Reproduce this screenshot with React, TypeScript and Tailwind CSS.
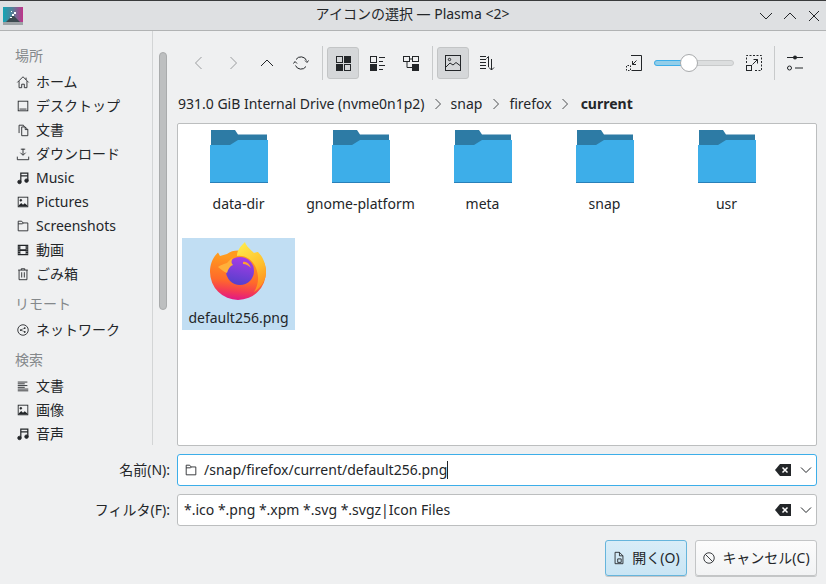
import type { ReactNode } from "react";

function Ico({ children, size = 16, className = "" }: { children: ReactNode; size?: number; className?: string }) {
  return (
    <svg width={size} height={size} viewBox="0 0 16 16" fill="none" stroke="currentColor" strokeWidth="1" className={`shrink-0 ${className}`}>
      {children}
    </svg>
  );
}

const icons: Record<string, ReactNode> = {
  home: <path d="M1.500 8.500 8 2l6.500 6.500M3.500 7v7.500h3v-4h3v4h3V7M11.500 3v2.500" />,
  desktop: <><rect x="2.500" y="2.500" width="11" height="11" /><path d="M4 11.500h8" /></>,
  docs: <path d="M3.500 11.500v-9h5l1 2M6.500 14.500v-10h4l3 3v7zM10.500 4.500v3h3" />,
  download: <path d="M1.500 11v3.500h13V11M8 2v7M5 6.500 8 9.500l3-3M5.500 2.500h5" />,
  music: <><path d="M5.500 12V2.500h8V11M5.500 5.500h8" strokeWidth="1.400" /><circle cx="4" cy="12.500" r="2" fill="currentColor" /><circle cx="12" cy="11" r="2" fill="currentColor" /></>,
  picture: <><rect x="2.500" y="2.500" width="11" height="11" /><circle cx="5.500" cy="6" r="1" fill="currentColor" /><path d="M3 12l3-3 2 2 2-1.500 3 2.500v1H3z" fill="currentColor" stroke="none" /></>,
  folder: <path d="M2.500 13.500v-11h4l1.500 2h5.500v9zM2.500 5.500h5l1-1" />,
  video: <><rect x="2" y="2" width="12" height="12" fill="currentColor" stroke="none" /><path d="M5 3.500h6v3.500H5zM5 9h6v3.500H5z" fill="#eff0f1" stroke="none" /><path d="M3 4.500h1M3 7h1M3 9.500h1M3 12h1M12 4.500h1M12 7h1M12 9.500h1M12 12h1" stroke="#eff0f1" /></>,
  trash: <path d="M2.500 3.500h11M6 3.500v-1.500h4v1.500M3.500 3.500v11h9v-11M6.500 6v6M9.500 6v6" />,
  network: <><circle cx="8" cy="8" r="6" /><circle cx="5.500" cy="8" r="1" fill="currentColor" stroke="none" /><circle cx="10" cy="5.800" r="1" fill="currentColor" stroke="none" /><circle cx="10" cy="10.200" r="1" fill="currentColor" stroke="none" /><path d="M5.500 8 10 5.800M5.500 8 10 10.200" strokeWidth="0.600" /></>,
  text: <path d="M2 3.500h11M2 5.500h8M2 7.500h11M2 9.500h8M2 11.500h12M2 13.500h12" />,
};

function Place({ icon, label }: { icon: string; label: string }) {
  return (
    <div className="flex h-6 items-center gap-[6px] pl-[16px]">
      <span className="flex h-4 w-[14px] items-center justify-center">
        <Ico size={14}>{icons[icon]}</Ico>
      </span>
      <span className="whitespace-nowrap">{label}</span>
    </div>
  );
}

function Header({ label, className = "" }: { label: string; className?: string }) {
  return <div className={`pl-[15px] text-[#84888b] ${className}`}>{label}</div>;
}

function Sidebar() {
  return (
    <aside className="mb-[2px] w-[153px] shrink-0 border-r border-[#d3d5d6] pt-[15px]">
      <Header label="場所" className="mb-[4px] h-5 leading-5" />
      <Place icon="home" label="ホーム" />
      <Place icon="desktop" label="デスクトップ" />
      <Place icon="docs" label="文書" />
      <Place icon="download" label="ダウンロード" />
      <Place icon="music" label="Music" />
      <Place icon="picture" label="Pictures" />
      <Place icon="folder" label="Screenshots" />
      <Place icon="video" label="動画" />
      <Place icon="trash" label="ごみ箱" />
      <Header label="リモート" className="mt-[8px] mb-[4px] h-5 leading-5" />
      <Place icon="network" label="ネットワーク" />
      <Header label="検索" className="mt-[8px] mb-[4px] h-5 leading-5" />
      <Place icon="text" label="文書" />
      <Place icon="picture" label="画像" />
      <Place icon="music" label="音声" />
    </aside>
  );
}

function ToolBtn({ children, active, muted }: { children: ReactNode; active?: boolean; muted?: boolean }) {
  return (
    <div
      className={`flex h-8 w-8 items-center justify-center rounded-[3px] ${
        active ? "border border-[#c3c5c6] bg-[#d5d7d9]" : ""
      } ${muted ? "text-[#9a9c9e]" : "text-[#232629]"}`}
    >
      {children}
    </div>
  );
}

function Sep({ className = "" }: { className?: string }) {
  return <div className={`h-[34px] w-px bg-[#c8cacb] ${className}`} />;
}

function Toolbar() {
  return (
    <div className="flex h-[34px] items-center pr-[6px] pl-[6px]">
      <div className="flex items-center gap-[2px]">
        <ToolBtn muted><Ico><path d="M10.500 2 4.500 8l6 6" /></Ico></ToolBtn>
        <ToolBtn muted><Ico><path d="M5.500 2l6 6-6 6" /></Ico></ToolBtn>
        <ToolBtn><Ico><path d="M2 11l6-6 6 6" /></Ico></ToolBtn>
        <ToolBtn>
          <Ico>
            <path d="M13.500 5.500A6 6 0 0 0 3 4.500M2.500 10.500A6 6 0 0 0 13 11.500" />
            <path d="M2 7.500 4 9.500M2 7.500 0.500 9.500M14 8.500 12 6.500M14 8.500 15.500 6.500" transform="translate(0 -1) " />
          </Ico>
        </ToolBtn>
      </div>
      <Sep className="mr-[4px] ml-[5px]" />
      <div className="flex items-center gap-[2px]">
        <ToolBtn active>
          <Ico>
            <rect x="1.500" y="1.500" width="6" height="6" />
            <rect x="9" y="1" width="7" height="7" fill="currentColor" stroke="none" />
            <rect x="1" y="9" width="7" height="7" fill="currentColor" stroke="none" />
            <rect x="9.500" y="9.500" width="6" height="6" />
          </Ico>
        </ToolBtn>
        <ToolBtn>
          <Ico>
            <rect x="1.500" y="1.500" width="6" height="6" />
            <rect x="1" y="9" width="7" height="7" fill="currentColor" stroke="none" />
            <path d="M10 2.500h6M10 6.500h4M10 10.500h6M10 14.500h4" />
          </Ico>
        </ToolBtn>
        <ToolBtn>
          <Ico>
            <rect x="0.500" y="1.500" width="6" height="5" />
            <rect x="9.500" y="1.500" width="6" height="5" />
            <rect x="9" y="9" width="7" height="7" fill="currentColor" stroke="none" />
            <path d="M6.500 4h3M4 6.500V12.500h5" />
          </Ico>
        </ToolBtn>
      </div>
      <Sep className="mr-[4px] ml-[5px]" />
      <div className="flex items-center gap-[2px]">
        <ToolBtn active>
          <Ico>
            <rect x="0.500" y="0.500" width="15" height="15" />
            <circle cx="4.500" cy="4.500" r="1.200" />
            <path d="M1 12l4-4 3 2 3-2.500 4 3" />
          </Ico>
        </ToolBtn>
        <ToolBtn>
          <Ico>
            <path d="M1 1.500h6M1 4.500h6M1 7.500h6M1 10.500h6M1 13.500h6M12.500 4v11M10 12.500l2.500 2.500 2.500-2.500M9.500 12V1.500L7.500 3.500" />
          </Ico>
        </ToolBtn>
      </div>
      <div className="ml-auto flex items-center">
        <ToolBtn>
          <Ico>
            <path d="M5 0.500H15.500V15.500H5.500M10.500 5.500 6.500 9.500M6.500 6V9.500H10" />
            <path d="M0.500 15.500V10.500H4.500V15.500Z" strokeDasharray="1.500 1.500" />
          </Ico>
        </ToolBtn>
        <div className="relative mx-[4px] h-[6px] w-[80px] rounded-full border border-[#c8cacb] bg-[#dcdedf]">
          <div className="absolute -top-px -left-px h-[6px] w-[36px] rounded-l-full border border-[#3daee9] bg-[#93cee9]" />
          <div className="absolute -top-[7px] left-[25px] h-[18px] w-[18px] rounded-full border border-[#a8aaac] bg-white" />
        </div>
        <ToolBtn>
          <Ico>
            <path d="M0.500 8V0.500H15.500V15.500H8" strokeDasharray="2 1.500" />
            <rect x="0.500" y="10.500" width="5" height="5" />
            <path d="M6.500 9.500l5-5M7.500 4.500h4v4" />
          </Ico>
        </ToolBtn>
        <Sep className="mx-[4px]" />
        <ToolBtn>
          <Ico>
            <path d="M0 2.500h16M0 13h4M8 13h8" />
            <circle cx="8" cy="2.500" r="2" fill="currentColor" stroke="none" />
            <circle cx="2.500" cy="13" r="2" fill="#eff0f1" />
          </Ico>
        </ToolBtn>
      </div>
    </div>
  );
}

function Breadcrumb() {
  const chevron = (
    <svg width="8" height="12" viewBox="0 0 8 12" fill="none" stroke="#4d4f51" className="mx-[9px] shrink-0">
      <path d="M1.500 1l5 5-5 5" />
    </svg>
  );
  return (
    <div className="mt-[12px] flex h-6 items-center pl-[1px]">
      <span>931.0 GiB Internal Drive (nvme0n1p2)</span>
      {chevron}
      <span>snap</span>
      <span className="w-px" />
      {chevron}
      <span>firefox</span>
      {chevron}
      <span className="ml-[3px] font-bold">current</span>
    </div>
  );
}

function FolderIcon() {
  return (
    <svg width="58" height="54" viewBox="0 0 58 54">
      <path d="M1 0H25L28 4.500H57V16H1Z" fill="#2d7ba5" />
      <path d="M0 15H20L28 10H58V53H0Z" fill="#3daee9" />
      <rect x="0" y="52" width="58" height="1" fill="#2980b9" />
    </svg>
  );
}

function FirefoxLogo() {
  return (
    <svg width="56" height="58" viewBox="0 0 56 58" className="-ml-px">
      <defs>
        <linearGradient id="ffBase" x1="0.550" y1="0.150" x2="0.450" y2="1">
          <stop offset="0" stopColor="#ff9a1f" />
          <stop offset="0.550" stopColor="#ff6a2a" />
          <stop offset="0.800" stopColor="#f43a55" />
          <stop offset="1" stopColor="#e01888" />
        </linearGradient>
        <linearGradient id="ffFlame" x1="0.300" y1="0" x2="0.700" y2="1">
          <stop offset="0" stopColor="#ffe84a" />
          <stop offset="0.550" stopColor="#ffc02c" />
          <stop offset="1" stopColor="#ff8a1f" />
        </linearGradient>
        <linearGradient id="ffBall" x1="0.600" y1="0" x2="0.400" y2="1">
          <stop offset="0" stopColor="#a83ce6" />
          <stop offset="1" stopColor="#5440cc" />
        </linearGradient>
      </defs>
      <path d="M8 10.500 10 14 17 12C20 9.500 24 8.500 28 8.500L42 12 52 17C55 21 56 26 56 30A28 28 0 0 1 0 30C0 22 3 15 8 10.500Z" fill="url(#ffBase)" />
      <path d="M35 0C36 4 40 7 44 11 46 10 47.500 10 48 10 53 15 56 22 56 30 56 38 51 46 44 50 49 42 49 34 46 26 42 17 35 13 27 14 27 8 31 4 35 0Z" fill="url(#ffFlame)" />
      <circle cx="30" cy="29" r="14" fill="url(#ffBall)" />
      <path d="M33 20C36 19 39 21 41 26 39 24 36 22 33 22Z" fill="#ffa030" />
      <path d="M8 25C10 23 14 22 17 21 19 19 20 17 23 16 21 19 21 21 23 23 20 24 18 27 17 31 14 30 11 27 8 25Z" fill="#ffb03a" />
    </svg>
  );
}

function FileItem({ name }: { name: string }) {
  return (
    <div className="flex h-[92px] w-[113px] flex-col items-center pt-[6px]">
      <div className="flex h-[56px] items-start">
        <FolderIcon />
      </div>
      <div className="mt-[8px] h-5 whitespace-nowrap leading-5">{name}</div>
    </div>
  );
}

function FilePane() {
  const names = ["data-dir", "gnome-platform", "meta", "snap", "usr"];
  return (
    <div className="mt-[7px] h-[323px] rounded-[2px] border border-[#bcbebf] bg-white">
      <div className="grid grid-cols-[repeat(5,122px)] gap-y-[22px] pl-[4px]">
        {names.map((n) => (
          <FileItem key={n} name={n} />
        ))}
        <div className="flex h-[92px] w-[113px] flex-col items-center bg-[#c1def3] pt-[4px]">
          <FirefoxLogo />
          <div className="mt-[8px] h-5 whitespace-nowrap leading-5">default256.png</div>
        </div>
      </div>
    </div>
  );
}

function Backspace() {
  return (
    <svg width="16" height="12" viewBox="0 0 16 12">
      <path d="M5 0H16V12H5L0 6Z" fill="#232629" />
      <path d="M7.500 3.500l5 5M12.500 3.500l-5 5" stroke="#fff" strokeWidth="1.500" />
    </svg>
  );
}

function ComboRight() {
  return (
    <div className="ml-auto flex items-center gap-[8px]">
      <Backspace />
      <svg width="14" height="8" viewBox="0 0 14 8" fill="none" stroke="#232629">
        <path d="M2 1.500l5 5 5-5" />
      </svg>
    </div>
  );
}

function FormRow({ label, focused, children }: { label: string; focused?: boolean; children: ReactNode }) {
  return (
    <div className="flex items-center">
      <div className="w-[170px] shrink-0 text-right">{label}</div>
      <div
        className={`ml-[7px] flex h-8 w-[640px] items-center rounded-[3px] border bg-white pr-[3px] pl-[6px] ${
          focused ? "border-[#3daee9]" : "border-[#bcbebf]"
        }`}
      >
        {children}
        <ComboRight />
      </div>
    </div>
  );
}

function DialogButton({ icon, label, primary, className = "" }: { icon: ReactNode; label: string; primary?: boolean; className?: string }) {
  return (
    <div
      className={`flex h-9 items-center justify-center gap-[6px] rounded-[3px] border shadow-[0_1px_0_#c4c6c7] ${
        primary ? "border-[#66b5dc] bg-gradient-to-b from-[#d9edf8] to-[#c9e5f4]" : "border-[#c3c5c6] bg-gradient-to-b from-[#fcfcfc] to-[#f2f3f4]"
      } ${className}`}
    >
      {icon}
      <span className="whitespace-nowrap">{label}</span>
    </div>
  );
}

export default function App() {
  return (
    <div className="flex h-[584px] w-[826px] flex-col overflow-hidden bg-[#eff0f1] font-['Noto_Sans','Noto_Sans_CJK_JP',sans-serif] text-[14px] leading-[18px] text-[#232629]">
      {/* title bar */}
      <div className="flex h-[31px] shrink-0 items-center border-t border-b border-t-[#3a3b3c] border-b-[#b1b3b4] bg-[#dee0e2] pr-[4px] pl-[3px]">
        <svg width="20" height="18" viewBox="0 0 20 18" className="shrink-0">
          <defs>
            <linearGradient id="appIco" x1="0" y1="0" x2="1" y2="0">
              <stop offset="0" stopColor="#12a5b5" />
              <stop offset="0.500" stopColor="#5a7d96" />
              <stop offset="1" stopColor="#c0338a" />
            </linearGradient>
          </defs>
          <rect width="20" height="15" fill="url(#appIco)" />
          <path d="M3 15 10 8 17 15Z" fill="#3c4a50" />
          <path d="M9 7h2v2H9zM11 5h2v2h-2zM8 4h1v1H8zM7 10h2v1H7z" fill="#fff" />
          <rect y="15" width="20" height="3" fill="#9da3a6" />
        </svg>
        <div className="-mt-[3px] flex-1 pl-[44px] text-center">アイコンの選択 — Plasma &lt;2&gt;</div>
        <div className="flex items-center gap-[8px] text-[#232629]">
          <Ico><path d="M2 5l6 6 6-6" /></Ico>
          <Ico><path d="M2 11l6-6 6 6" /></Ico>
          <Ico><path d="M3 3l10 10M13 3 3 13" /></Ico>
        </div>
      </div>

      <div className="flex h-[416px] shrink-0">
        <Sidebar />
        <div className="w-[24px] shrink-0 pt-[21px] pl-[6px]">
          <div className="h-[258px] w-2 rounded-full border border-[#a9abac] bg-[#bdbfc0]" />
        </div>
        <div className="flex w-[640px] shrink-0 flex-col pt-[15px]">
          <Toolbar />
          <Breadcrumb />
          <FilePane />
        </div>
      </div>

      <div className="mt-[7px] flex flex-col gap-[8px]">
        <FormRow label="名前(N):" focused>
          <Ico size={14}>{icons.folder}</Ico>
          <span className="ml-[6px] whitespace-nowrap border-r border-[#232629]">/snap/firefox/current/default256.png</span>
        </FormRow>
        <FormRow label="フィルタ(F):">
          <span className="whitespace-nowrap">*.ico *.png *.xpm *.svg *.svgz|Icon Files</span>
        </FormRow>
      </div>

      <div className="mt-[14px] flex justify-end gap-[8px] pr-[9px]">
        <DialogButton
          primary
          className="w-[82px]"
          label="開く(O)"
          icon={<Ico size={14}><path d="M3.500 14.500v-13h5l4 4v9zM8.500 1.500v4h4M6.500 13v-4h4v4z" /></Ico>}
        />
        <DialogButton
          className="w-[122px]"
          label="キャンセル(C)"
          icon={<Ico size={14}><circle cx="8" cy="8" r="6" /><path d="M3.800 3.800l8.400 8.400" /></Ico>}
        />
      </div>
    </div>
  );
}
